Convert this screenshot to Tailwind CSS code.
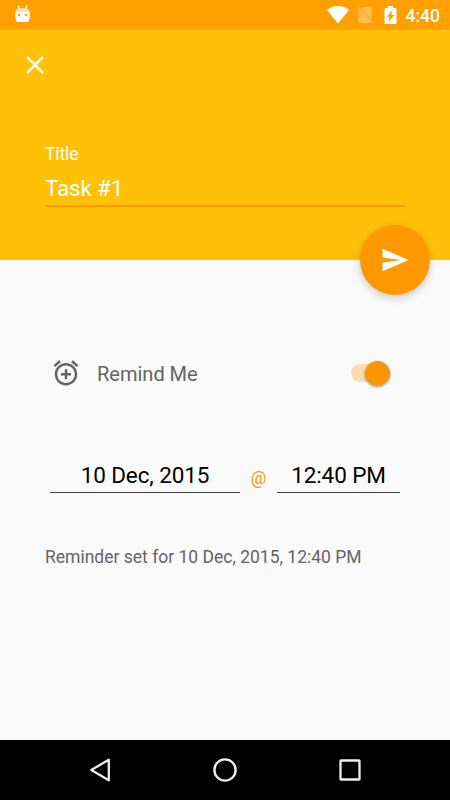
<!DOCTYPE html>
<html lang="en">
<head>
  <meta charset="UTF-8">
  <meta name="viewport" content="width=device-width, initial-scale=1.0">
  <script src="https://cdn.jsdelivr.net/npm/@tailwindcss/browser@4"></script>
  <title>Reminder</title>
</head>

<body class="w-[450px] h-[800px] flex flex-col overflow-hidden bg-[#fafafa] font-['Roboto',sans-serif] select-none">

    <!--Status bar-->
    <div class="h-[30px] shrink-0 flex items-center justify-between bg-[#ffa000] pl-[14px] pr-[10px] text-white">
        <svg class="w-[17px] h-[20px]" viewBox="0 0 17 20" fill="#fff">
            <path d="M4.200 0.500 5.400 4M12.800 0.500 11.600 4" stroke="#fff" stroke-width="1.300"/>
            <path d="M2.400 4.200Q8.500 2 14.600 4.200L15 6.500H2Z" fill="#ffe3b3"/>
            <path fill-rule="evenodd" d="M1.500 6Q8.500 7 15.500 6Q16.500 11 15 15.500Q14.500 17 13 17H4Q2.500 17 2 15.500Q.500 11 1.500 6ZM4 9V11H6V9ZM11 9V11H13V9Z"/>
        </svg>
        <div class="flex items-center">
            <!--Wifi icon-->
            <svg class="w-[22px] h-[18px]" viewBox="0 0 22 18" fill="#fff"><path d="M0 3.900C3 1.400 7 0 11 0S19 1.400 22 3.900L11 17.600Z"/></svg>
            <!--No sim icon-->
            <svg class="w-[16px] h-[18px] ml-[8px]" viewBox="0 0 16 18" fill="#fff" fill-opacity=".32"><path d="M5.700 1H13Q14.500 1 14.500 2.500V13.600L3.900 2.900ZM1.500 4 14.200 16.800Q13.800 17 13 17H3Q1.500 17 1.500 15.500V4Z"/><path d="M1 1 0 2 15 17.400 16 16.400Z"/></svg>
            <!--Battery icon-->
            <svg class="w-[13px] h-[18px] ml-[11px]" viewBox="0 0 13 18" fill="#fff"><path fill-rule="evenodd" d="M4 0H9V2H11.500Q12.500 2 12.500 3V17Q12.500 18 11.500 18H1.500Q.500 18 .500 17V3Q.500 2 1.500 2H4ZM8.500 4.200 2.800 10.800H5.500L4.400 16 10.500 9H7.300Z"/></svg>
            <span class="relative top-px ml-[9px] text-[17.5px] leading-[20px] font-medium">4:40</span>
        </div>
    </div>

    <!--Header with the task title-->
    <header class="relative h-[230px] shrink-0 bg-[#ffc107] px-[45px] text-white">
        <svg class="w-[30px] h-[30px] relative top-[20px] -left-[25px]" viewBox="0 0 24 24" fill="#fff"><path d="M19 6.410 17.590 5 12 10.590 6.410 5 5 6.410 10.590 12 5 17.590 6.410 19 12 13.410 17.590 19 19 17.590 13.410 12z"/></svg>
        <div class="mt-[84px] text-[17.5px] leading-[21px] tracking-[-0.1px]">Title</div>
        <div class="mt-[8px] h-[34px] border-b-2 border-[#ff9800] text-[22.5px] leading-[30px] tracking-[-0.2px]">Task #1</div>

        <!--Send button-->
        <div class="absolute right-[20px] -bottom-[35px] size-[70px] rounded-full bg-[#ff9800] flex items-center justify-center shadow-[0_3px_8px_rgba(0,0,0,0.2)]">
            <svg class="size-[30px]" viewBox="0 0 24 24" fill="#fff"><path d="M2.010 21 23 12 2.010 3 2 10l15 2-15 2z"/></svg>
        </div>
    </header>

    <main class="grow px-[45px] text-[#646464]">
        <!--Reminder switch-->
        <div class="mt-[98px] h-[30px] flex items-center pl-[6px] pr-[15px]">
            <svg class="size-[30px]" viewBox="0 0 24 24" fill="#646464"><path d="M7.880 3.390 6.600 1.860 2 5.710l1.290 1.530 4.590-3.850zM22 5.720l-4.600-3.860-1.290 1.530 4.600 3.860L22 5.720zM12 4c-4.970 0-9 4.030-9 9s4.020 9 9 9c4.970 0 9-4.030 9-9s-4.030-9-9-9zm0 16c-3.870 0-7-3.130-7-7s3.130-7 7-7 7 3.130 7 7-3.130 7-7 7zm1-11h-2v3H8v2h3v3h2v-3h3v-2h-3V9z"/></svg>
            <span class="ml-[16px] pt-[2px] text-[20px] leading-[30px]">Remind Me</span>
            <div class="ml-auto w-[39px] h-[18px] flex items-center justify-end rounded-full bg-[#fcdcae]">
                <div class="size-[25px] shrink-0 rounded-full bg-[#fb9600] shadow-[0_1px_3px_rgba(0,0,0,0.4)]"></div>
            </div>
        </div>

        <!--Date and time-->
        <div class="mt-[72px] h-[33px] flex pl-[5px] pr-[5px] text-[22.5px] leading-[30px] text-center text-black">
            <div class="w-[190px] border-b border-[#404040] tracking-[-0.1px]">10 Dec, 2015</div>
            <div class="w-[37px] pt-[3px] text-[17.5px] text-[#ff9800]">@</div>
            <div class="w-[123px] border-b border-[#404040] tracking-[-0.1px]">12:40 PM</div>
        </div>

        <div class="mt-[54px] text-[17.5px] leading-[21px]">Reminder set for 10 Dec, 2015, 12:40 PM</div>
    </main>

    <!--Navigation bar-->
    <footer class="h-[60px] shrink-0 flex items-center justify-between bg-black px-[85px]">
        <svg class="size-[30px]" viewBox="0 0 30 30" fill="none" stroke="#eee" stroke-width="2.300" stroke-linejoin="round"><path d="M23.800 4.700V25.300L6.300 15Z"/></svg>
        <svg class="size-[30px]" viewBox="0 0 30 30" fill="none" stroke="#eee" stroke-width="2.400"><circle cx="15" cy="15" r="10.600"/></svg>
        <svg class="size-[30px]" viewBox="0 0 30 30" fill="none" stroke="#eee" stroke-width="2.300"><rect x="5.500" y="5.500" width="19" height="19" rx=".500"/></svg>
    </footer>
</body>
</html>
